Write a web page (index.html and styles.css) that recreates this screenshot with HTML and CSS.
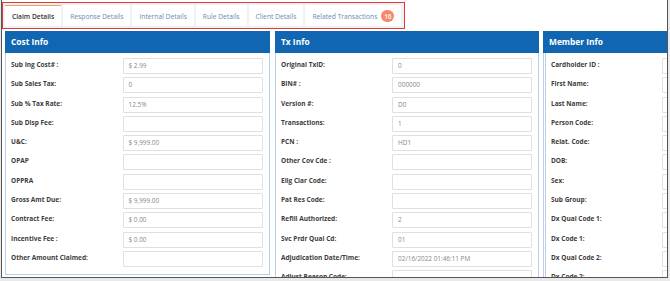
FILE: index.html
```html
<!DOCTYPE html>
<html lang="en">
<head>
  <meta charset="UTF-8" />
  <title>Claim Details</title>
  <link rel="stylesheet" href="styles.css">
</head>
<body>
  <div class="frame">
    <div class="tabs">
      <div class="tab active">Claim Details</div>
      <div class="tab">Response Details</div>
      <div class="tab">Internal Details</div>
      <div class="tab">Rule Details</div>
      <div class="tab">Client Details</div>
      <div class="tab">Related Transactions <span class="badge">16</span></div>
    </div>

    <div class="panels">
      <div class="panel cost">
        <div class="panel-head">Cost Info</div>
        <div class="panel-body">
          <div class="row"><label>Sub Ing Cost# :</label><div class="field">$ 2.99</div></div>
          <div class="row"><label>Sub Sales Tax:</label><div class="field">0</div></div>
          <div class="row"><label>Sub % Tax Rate:</label><div class="field">12.5%</div></div>
          <div class="row"><label>Sub Disp Fee:</label><div class="field"></div></div>
          <div class="row"><label>U&amp;C:</label><div class="field">$ 9,999.00</div></div>
          <div class="row"><label>OPAP</label><div class="field"></div></div>
          <div class="row"><label>OPPRA</label><div class="field"></div></div>
          <div class="row"><label>Gross Amt Due:</label><div class="field">$ 9,999.00</div></div>
          <div class="row"><label>Contract Fee:</label><div class="field">$ 0.00</div></div>
          <div class="row"><label>Incentive Fee :</label><div class="field">$ 0.00</div></div>
          <div class="row"><label>Other Amount Claimed:</label><div class="field"></div></div>
        </div>
      </div>

      <div class="panel tx">
        <div class="panel-head">Tx Info</div>
        <div class="panel-body">
          <div class="row"><label>Original TxID:</label><div class="field">0</div></div>
          <div class="row"><label>BIN# :</label><div class="field">000000</div></div>
          <div class="row"><label>Version #:</label><div class="field">D0</div></div>
          <div class="row"><label>Transactions:</label><div class="field">1</div></div>
          <div class="row"><label>PCN :</label><div class="field">HD1</div></div>
          <div class="row"><label>Other Cov Cde :</label><div class="field"></div></div>
          <div class="row"><label>Elig Clar Code:</label><div class="field"></div></div>
          <div class="row"><label>Pat Res Code:</label><div class="field"></div></div>
          <div class="row"><label>Refill Authorized:</label><div class="field">2</div></div>
          <div class="row"><label>Svc Prdr Qual Cd:</label><div class="field">01</div></div>
          <div class="row"><label>Adjudication Date/Time:</label><div class="field">02/16/2022 01:46:11 PM</div></div>
          <div class="row"><label>Adjust Reason Code:</label><div class="field"></div></div>
        </div>
      </div>

      <div class="panel member">
        <div class="panel-head">Member Info</div>
        <div class="panel-body">
          <div class="row"><label>Cardholder ID :</label><div class="field"></div></div>
          <div class="row"><label>First Name:</label><div class="field"></div></div>
          <div class="row"><label>Last Name:</label><div class="field"></div></div>
          <div class="row"><label>Person Code:</label><div class="field"></div></div>
          <div class="row"><label>Relat. Code:</label><div class="field"></div></div>
          <div class="row"><label>DOB:</label><div class="field"></div></div>
          <div class="row"><label>Sex:</label><div class="field"></div></div>
          <div class="row"><label>Sub Group:</label><div class="field"></div></div>
          <div class="row"><label>Dx Qual Code 1:</label><div class="field"></div></div>
          <div class="row"><label>Dx Code 1:</label><div class="field"></div></div>
          <div class="row"><label>Dx Qual Code 2:</label><div class="field"></div></div>
          <div class="row"><label>Dx Code 2:</label><div class="field"></div></div>
        </div>
      </div>
    </div>
  </div>
</body>
</html>
```

FILE: styles.css
```css
* {
  margin: 0;
  padding: 0;
  box-sizing: border-box;
}
body {
  font-family: 'Open Sans', sans-serif;
  background: #e9e9e9;
  width: 670px;
  height: 281px;
  overflow: hidden;
}
.frame {
  margin-left: 1px;
  width: 667px;
  height: 278px;
  background: #fff;
  border-left: 1px solid #555;
  border-right: 1px solid #555;
  border-bottom: 1px solid #555;
  overflow: hidden;
  padding-top: 2px;
}
.tabs {
  display: flex;
  gap: 2px;
  width: 403px;
  height: 27px;
  padding: 2px;
  border: 1px solid #e2393c;
  background: #eff1f3;
}
.tab {
  display: flex;
  align-items: center;
  gap: 4px;
  padding: 0 7px;
  height: 21px;
  background: #fff;
  border-top: 1px solid #fff;
  font-size: 6.7px;
  color: #6a8bb0;
  white-space: nowrap;
}
.tab.active {
  border-top-color: #f3a45a;
  color: #333;
  font-weight: 600;
}
.badge {
  display: inline-flex;
  align-items: center;
  justify-content: center;
  width: 13px;
  height: 12px;
  border-radius: 6px;
  background: #f5876c;
  color: #fff;
  font-size: 6.5px;
  font-weight: 600;
}
.panels {
  display: flex;
  gap: 5px;
  margin-top: 2px;
  padding-left: 3px;
}
.panel {
  flex: none;
  width: 265px;
}
.panel.tx {
  width: 264px;
}
.panel.member {
  margin-left: -1px;
}
.panel-head {
  height: 22px;
  background: #1166b2;
  color: #fff;
  font-weight: 700;
  font-size: 8.4px;
  line-height: 22px;
  padding-left: 6px;
}
.panel-body {
  border: 1px solid #b7cfe9;
  border-top: none;
  padding: 5px 6px 4px 5px;
}
.member .panel-body {
  border-left: 3px double #b7cfe9;
}
.row {
  display: flex;
  height: 19.3px;
}
.row label {
  width: 112px;
  font-size: 6.5px;
  font-weight: 700;
  color: #3c3c3c;
  padding-top: 2px;
}
.field {
  width: 141px;
  height: 16px;
  border: 1px solid #e0e0e0;
  border-radius: 1px;
  font-size: 6.4px;
  color: #888;
  line-height: 14px;
  padding-left: 5px;
}
```
